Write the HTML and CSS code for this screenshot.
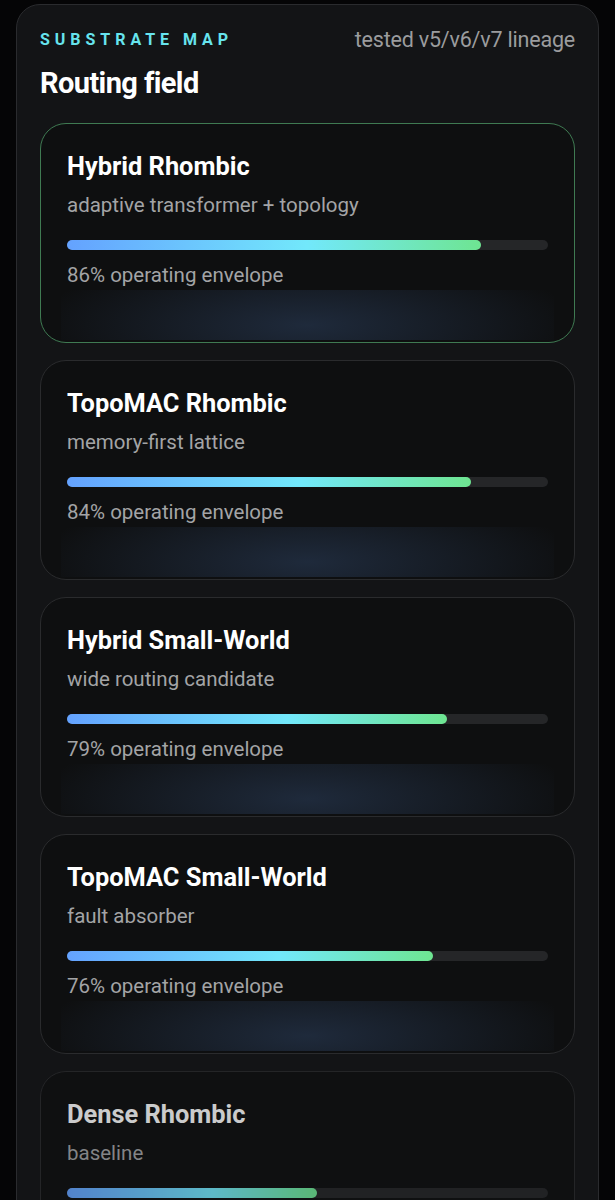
FILE: index.html
```html
<!DOCTYPE html>
<html lang="en">
<head>
  <meta charset="UTF-8" />
  <title>Substrate map</title>
  <link rel="stylesheet" href="styles.css">
</head>
<body>

  <section class="panel">
    <div class="panel-head">
      <span class="eyebrow">SUBSTRATE MAP</span>
      <span class="lineage">tested v5/v6/v7 lineage</span>
    </div>
    <h2>Routing field</h2>

    <div class="cards">
      <div class="card active">
        <div class="card-title">Hybrid Rhombic</div>
        <div class="card-sub">adaptive transformer + topology</div>
        <div class="track"><div class="fill" style="width:86%"></div></div>
        <div class="card-note">86% operating envelope</div>
        <div class="glow"></div>
      </div>

      <div class="card">
        <div class="card-title">TopoMAC Rhombic</div>
        <div class="card-sub">memory-first lattice</div>
        <div class="track"><div class="fill" style="width:84%"></div></div>
        <div class="card-note">84% operating envelope</div>
        <div class="glow"></div>
      </div>

      <div class="card">
        <div class="card-title">Hybrid Small-World</div>
        <div class="card-sub">wide routing candidate</div>
        <div class="track"><div class="fill" style="width:79%"></div></div>
        <div class="card-note">79% operating envelope</div>
        <div class="glow"></div>
      </div>

      <div class="card">
        <div class="card-title">TopoMAC Small-World</div>
        <div class="card-sub">fault absorber</div>
        <div class="track"><div class="fill" style="width:76%"></div></div>
        <div class="card-note">76% operating envelope</div>
        <div class="glow"></div>
      </div>

      <div class="card faded">
        <div class="card-title">Dense Rhombic</div>
        <div class="card-sub">baseline</div>
        <div class="track"><div class="fill" style="width:52%"></div></div>
        <div class="card-note">52% operating envelope</div>
        <div class="glow"></div>
      </div>
    </div>
  </section>

</body>
</html>
```

FILE: styles.css
```css
body {
  margin: 0;
  background: #050506;
  font-family: Roboto, "Noto Sans", sans-serif;
  color: #f2f2f2;
}
.panel {
  margin: 4px 16px 0 16px;
  padding: 22px 23px 24px 23px;
  background: #131416;
  border: 1px solid #2a2b2e;
  border-radius: 24px;
}
.panel-head {
  display: flex;
  justify-content: space-between;
  align-items: center;
  height: 24px;
}
.eyebrow {
  color: #67e4ee;
  font-size: 16px;
  font-weight: 700;
  letter-spacing: 0.31em;
}
.lineage {
  color: #9b9c9e;
  font-size: 21.5px;
  letter-spacing: -0.2px;
}
h2 {
  margin: 14px 0 0 0;
  font-size: 29px;
  line-height: 36px;
  font-weight: 700;
  letter-spacing: -0.6px;
  color: #fff;
}
.cards {
  display: flex;
  flex-direction: column;
  gap: 17px;
  margin-top: 22px;
}
.card {
  background: #0e0f10;
  border: 1px solid #2a2b2d;
  border-radius: 26px;
  padding: 27px 26px 2px 26px;
}
.card.active {
  border-color: #3f7a52;
}
.card.faded {
  opacity: 0.78;
}
.card-title {
  font-size: 25.4px;
  line-height: 30px;
  font-weight: 700;
  color: #fff;
}
.card-sub {
  margin-top: 11px;
  font-size: 20.5px;
  line-height: 26px;
  color: #a3a4a6;
}
.track {
  margin-top: 22px;
  height: 10px;
  border-radius: 5px;
  background: #252628;
}
.fill {
  height: 100%;
  border-radius: 5px;
  background: linear-gradient(90deg, #64a2ff 0%, #72e8fb 58%, #6ee591 100%);
}
.card-note {
  margin-top: 12px;
  font-size: 20.5px;
  line-height: 26px;
  color: #a3a4a6;
}
.glow {
  margin: 2px -6px 0 -6px;
  height: 50px;
  background: radial-gradient(ellipse 55% 150% at 50% 70%, rgba(60, 90, 136, 0.36), rgba(60, 90, 136, 0) 100%);
}
```
